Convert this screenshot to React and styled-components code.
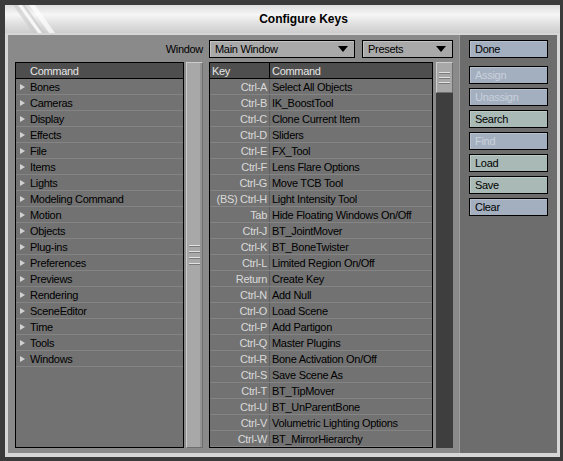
import React from "react";
import styled, { createGlobalStyle } from "styled-components";

const GlobalStyle = createGlobalStyle`
  html, body {
    margin: 0;
    padding: 0;
  }
  body {
    background: #3b3b3b;
    font-family: "Liberation Sans", Arial, sans-serif;
    font-size: 11px;
    letter-spacing: -0.3px;
    width: 563px;
    height: 461px;
    overflow: hidden;
  }
`;

const Window = styled.div`
  margin: 5px 0 0 5px;
  width: 555px;
  display: flex;
  flex-direction: column;
`;

const TitleBar = styled.div`
  position: relative;
  height: 28px;
  display: flex;
  align-items: center;
  justify-content: center;
  padding-left: 42px;
  background: linear-gradient(#dedede, #f6f6f6 35%, #e4e4e4 60%, #cdcdcd);
  font-family: "Liberation Sans", Arial, sans-serif;
  font-weight: bold;
  font-size: 12px;
  letter-spacing: 0;
  color: #000;
`;

const Stripes = styled.svg`
  position: absolute;
  left: 0;
  top: 0;
`;

const Frame = styled.div`
  display: flex;
  height: 418px;
  border: 3px solid #d6d6d6;
  border-top-width: 2px;
  border-bottom-width: 4px;
`;

const Main = styled.div`
  width: 451px;
  box-sizing: border-box;
  background: #8a8a8a;
  padding: 5px 6px 5px 7px;
  display: flex;
  flex-direction: column;
  gap: 4px;
`;

const TopRow = styled.div`
  display: flex;
  justify-content: flex-end;
  align-items: center;
  height: 18px;
  gap: 7px;
`;

const Label = styled.span`
  color: #000;
  margin-right: -1px;
`;

const Dropdown = styled.div`
  box-sizing: border-box;
  width: ${(p) => p.$w}px;
  height: 18px;
  border: 1px solid #000;
  background: #a9a9a9;
  box-shadow: inset 1px 1px #c4c4c4;
  display: flex;
  align-items: center;
  justify-content: space-between;
  padding: 0 6px 0 5px;
  color: #000;
`;

const Arrow = styled.span`
  width: 0;
  height: 0;
  border-left: 5px solid transparent;
  border-right: 5px solid transparent;
  border-top: 6px solid #000;
`;

const ListsRow = styled.div`
  display: flex;
  height: 386px;
`;

const ListBox = styled.div`
  box-sizing: border-box;
  width: ${(p) => p.$w}px;
  margin-right: ${(p) => p.$gap}px;
  border: 1px solid #000;
  background: #727272;
  display: flex;
  flex-direction: column;
  overflow: hidden;
`;

const HeaderRow = styled.div`
  height: 15px;
  flex-shrink: 0;
  border-bottom: 1px solid #000;
  background: #4e4e4e;
  color: #e6e6e6;
  display: flex;
  align-items: center;
  padding-left: ${(p) => p.$pad || 0}px;
`;

const Row = styled.div`
  height: 15px;
  flex-shrink: 0;
  border-bottom: 1px solid #848484;
  display: flex;
  align-items: center;
  color: #000;
  padding-left: ${(p) => p.$pad || 0}px;
  white-space: nowrap;
`;

const Tri = styled.span`
  width: 0;
  height: 0;
  border-top: 3px solid transparent;
  border-bottom: 3px solid transparent;
  border-left: 5px solid #d2d2d2;
  margin-right: 5px;
`;

const KeyCell = styled.div`
  box-sizing: border-box;
  width: 60px;
  height: 100%;
  flex-shrink: 0;
  display: flex;
  align-items: center;
  justify-content: ${(p) => (p.$head ? "flex-start" : "flex-end")};
  padding: 0 2px;
  border-right: 1px solid ${(p) => (p.$head ? "#000" : "#5f5f5f")};
  color: ${(p) => (p.$head ? "#e6e6e6" : "#dadada")};
`;

const CmdCell = styled.div`
  padding-left: 2px;
  color: ${(p) => (p.$head ? "#e6e6e6" : "#000")};
`;

const ScrollFull = styled.div`
  box-sizing: border-box;
  width: 17px;
  margin-right: 6px;
  background: #a8a8a8;
  border: 1px solid;
  border-color: #cdcdcd #6e6e6e #6e6e6e #cdcdcd;
  box-shadow: inset -2px 0 #939393;
  display: flex;
  flex-direction: column;
  align-items: center;
  justify-content: center;
  gap: 4px;
`;

const Grip = styled.div`
  width: 11px;
  height: 1px;
  background: #e2e2e2;
  border-bottom: 1px solid #7a7a7a;
  margin-left: -1px;
`;

const Track = styled.div`
  box-sizing: border-box;
  width: 17px;
  margin-left: 3px;
  background: #3e3e3e;
`;

const Thumb = styled.div`
  box-sizing: border-box;
  height: 31px;
  background: #a8a8a8;
  border: 1px solid;
  border-color: #cdcdcd #6e6e6e #6e6e6e #cdcdcd;
  display: flex;
  flex-direction: column;
  align-items: center;
  justify-content: center;
  gap: 3px;
`;

const Panel = styled.div`
  flex: 1;
  background: #6d6d6d;
  border-left: 1px solid #9c9c9c;
  padding: 5px 0 0 9px;
  display: flex;
  flex-direction: column;
  gap: 4px;
`;

const Button = styled.div`
  box-sizing: border-box;
  width: 79px;
  height: 18px;
  flex-shrink: 0;
  border: 1px solid #000;
  background: ${(p) => (p.$green ? "#a9bab6" : "#a3afbf")};
  box-shadow: inset 1px 1px ${(p) => (p.$green ? "#bccbc8" : "#b8c2cf")};
  color: ${(p) => (p.$off ? "#c9d1dc" : "#000")};
  display: flex;
  align-items: center;
  padding-left: 5px;
  margin-bottom: ${(p) => p.$mb || 0}px;
`;

const groups = [
  "Bones", "Cameras", "Display", "Effects", "File", "Items", "Lights",
  "Modeling Command", "Motion", "Objects", "Plug-ins", "Preferences",
  "Previews", "Rendering", "SceneEditor", "Time", "Tools", "Windows",
];

const keys = [
  ["Ctrl-A", "Select All Objects"],
  ["Ctrl-B", "IK_BoostTool"],
  ["Ctrl-C", "Clone Current Item"],
  ["Ctrl-D", "Sliders"],
  ["Ctrl-E", "FX_Tool"],
  ["Ctrl-F", "Lens Flare Options"],
  ["Ctrl-G", "Move TCB Tool"],
  ["(BS) Ctrl-H", "Light Intensity Tool"],
  ["Tab", "Hide Floating Windows On/Off"],
  ["Ctrl-J", "BT_JointMover"],
  ["Ctrl-K", "BT_BoneTwister"],
  ["Ctrl-L", "Limited Region On/Off"],
  ["Return", "Create Key"],
  ["Ctrl-N", "Add Null"],
  ["Ctrl-O", "Load Scene"],
  ["Ctrl-P", "Add Partigon"],
  ["Ctrl-Q", "Master Plugins"],
  ["Ctrl-R", "Bone Activation On/Off"],
  ["Ctrl-S", "Save Scene As"],
  ["Ctrl-T", "BT_TipMover"],
  ["Ctrl-U", "BT_UnParentBone"],
  ["Ctrl-V", "Volumetric Lighting Options"],
  ["Ctrl-W", "BT_MirrorHierarchy"],
];

const buttons = [
  { label: "Done", mb: 4 },
  { label: "Assign", off: true },
  { label: "Unassign", off: true },
  { label: "Search", green: true },
  { label: "Find", off: true },
  { label: "Load", green: true },
  { label: "Save", green: true },
  { label: "Clear" },
];

export default function App() {
  return (
    <>
      <GlobalStyle />
      <Window>
        <TitleBar>
          <Stripes width="60" height="28" viewBox="0 0 60 28">
            <polygon points="8,0 20,0 40,28 28,28" fill="#c9c9c9" opacity="0.6" />
            <polygon points="13,0 17,0 37,28 33,28" fill="#ffffff" opacity="0.8" />
            <polygon points="24,0 30,0 50,28 44,28" fill="#ffffff" opacity="0.7" />
          </Stripes>
          Configure Keys
        </TitleBar>
        <Frame>
          <Main>
            <TopRow>
              <Label>Window</Label>
              <Dropdown $w={146}>
                Main Window
                <Arrow />
              </Dropdown>
              <Dropdown $w={91}>
                Presets
                <Arrow />
              </Dropdown>
            </TopRow>
            <ListsRow>
              <ListBox $w={169} $gap={2}>
                <HeaderRow $pad={14}>Command</HeaderRow>
                {groups.map((g) => (
                  <Row key={g} $pad={4}>
                    <Tri />
                    {g}
                  </Row>
                ))}
              </ListBox>
              <ScrollFull>
                <Grip />
                <Grip />
                <Grip />
                <Grip />
              </ScrollFull>
              <ListBox $w={224} $gap={0}>
                <HeaderRow>
                  <KeyCell $head>Key</KeyCell>
                  <CmdCell $head>Command</CmdCell>
                </HeaderRow>
                {keys.map(([k, c]) => (
                  <Row key={k}>
                    <KeyCell>{k}</KeyCell>
                    <CmdCell>{c}</CmdCell>
                  </Row>
                ))}
              </ListBox>
              <Track>
                <Thumb>
                  <Grip />
                  <Grip />
                  <Grip />
                </Thumb>
              </Track>
            </ListsRow>
          </Main>
          <Panel>
            {buttons.map((b) => (
              <Button key={b.label} $green={b.green} $off={b.off} $mb={b.mb}>
                {b.label}
              </Button>
            ))}
          </Panel>
        </Frame>
      </Window>
    </>
  );
}
